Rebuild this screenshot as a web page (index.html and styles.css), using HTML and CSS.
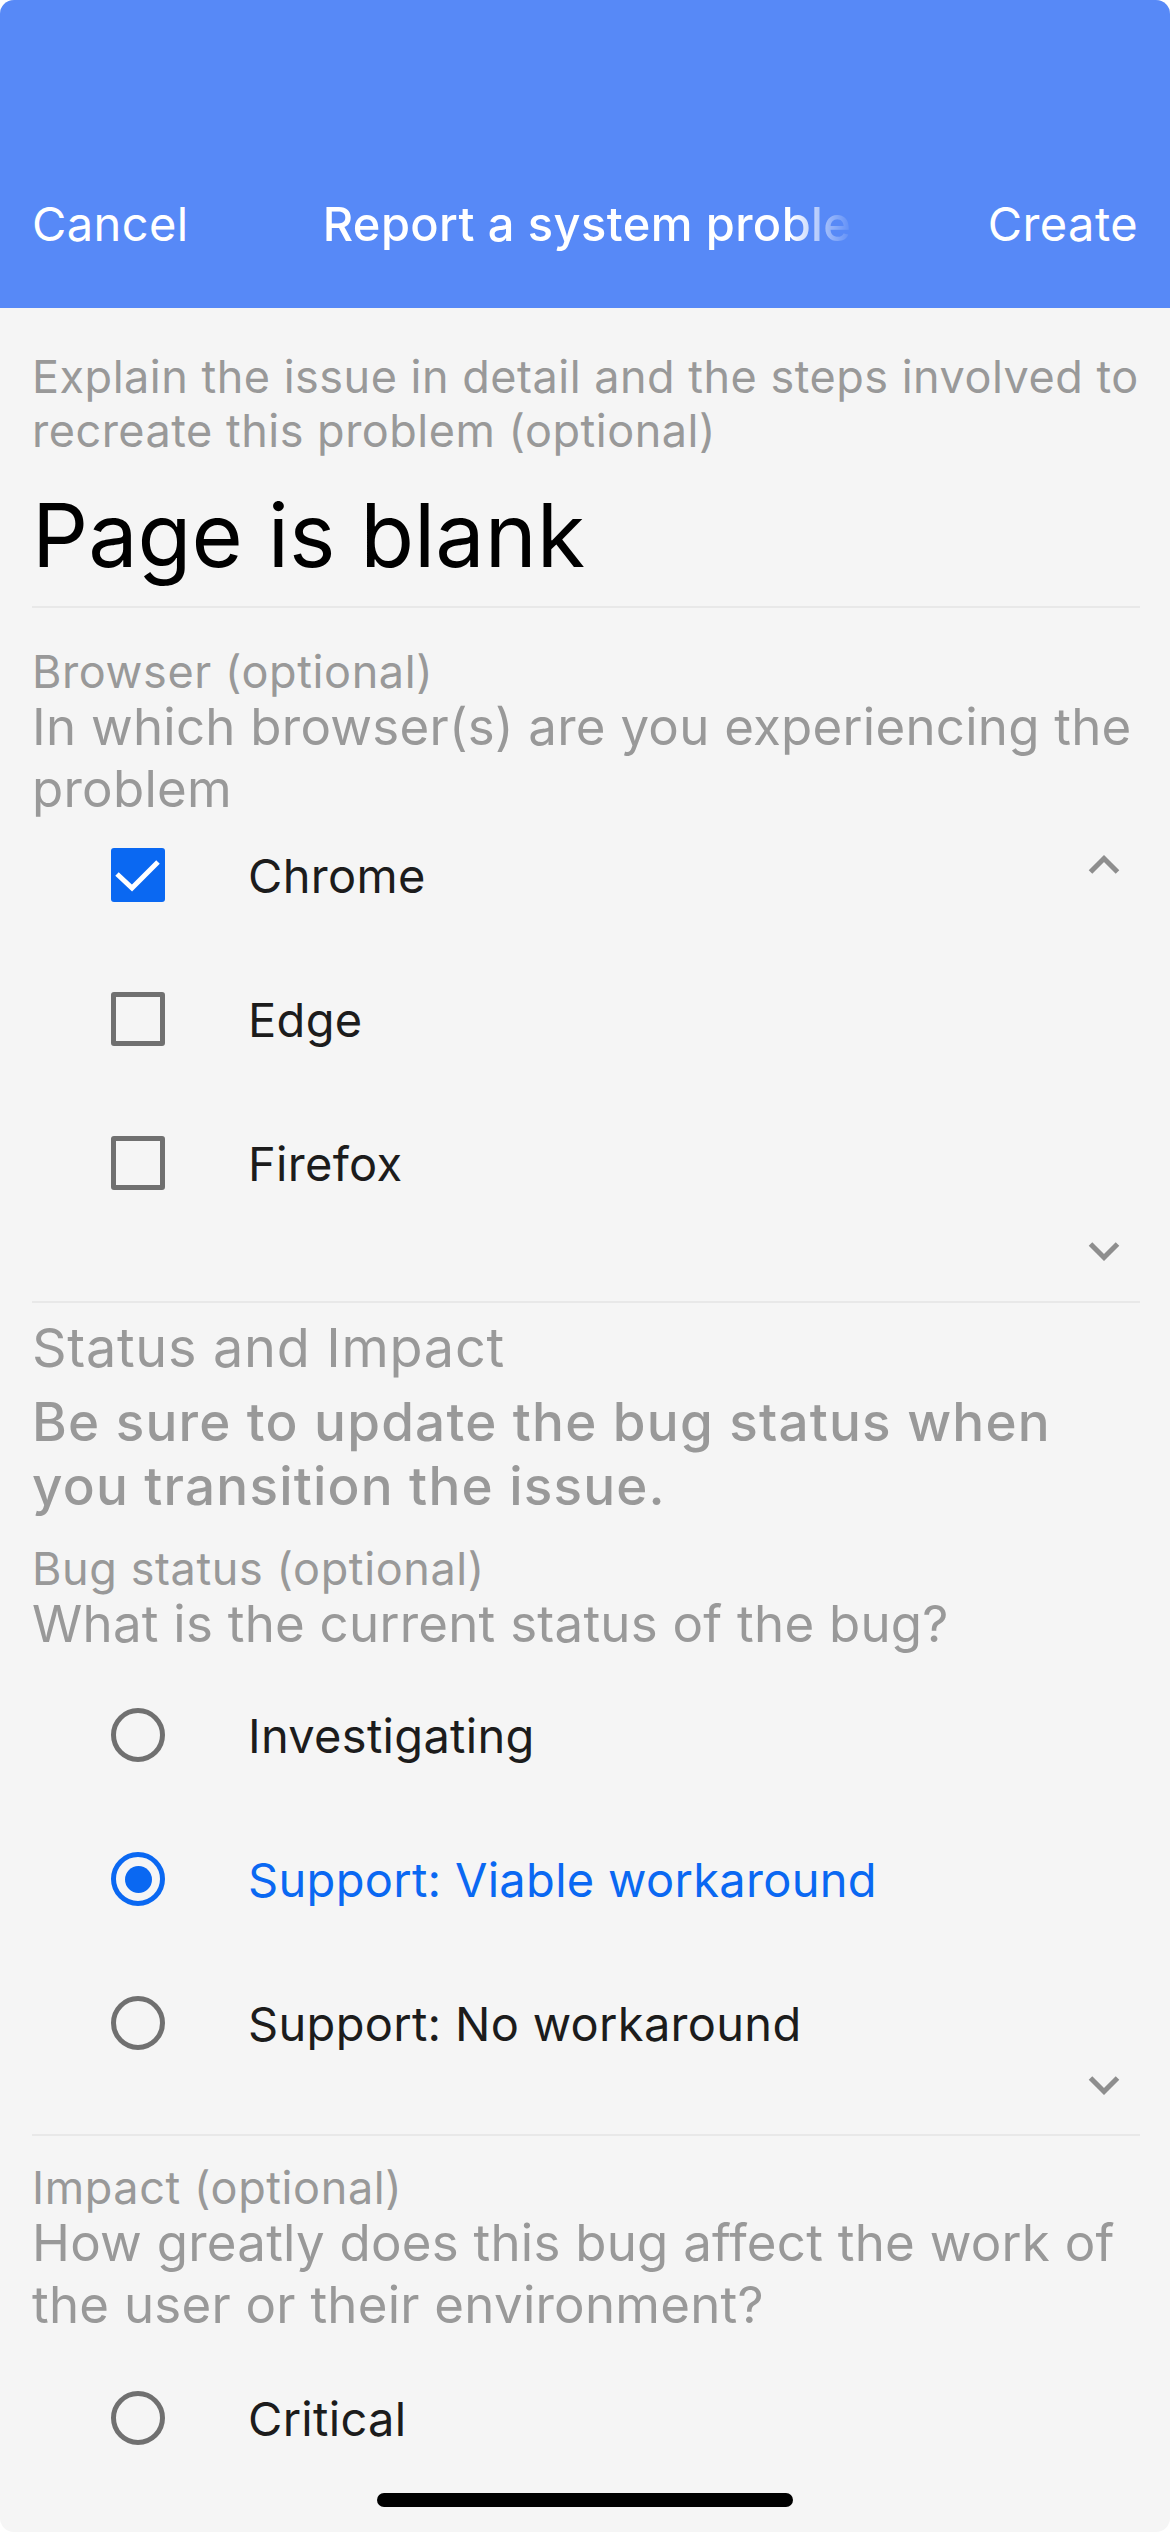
FILE: index.html
```html
<!DOCTYPE html>
<html>
<head lang="en">
    <meta charset="UTF-8">
    <meta name="viewport" content="width=device-width, initial-scale=1.0"/>
    <title>Report a system problem</title>
    <link rel="stylesheet" href="styles.css">
</head>
<body>
<div class="screen">
    <div class="nav">
        <span class="nav-btn">Cancel</span>
        <span class="nav-title">Report a system problem</span>
        <span class="nav-btn">Create</span>
    </div>

    <div class="content">
        <div class="field">
            <p class="field-label">Explain the issue in detail and the steps involved to recreate this problem (optional)</p>
            <p class="field-value">Page is blank</p>
        </div>

        <div class="group group-browser">
            <p class="q-label">Browser (optional)</p>
            <p class="q-desc">In which browser(s) are you experiencing the problem</p>
            <div class="picker">
                <div class="picker-body">
                    <ul class="options">
                        <li class="option">
                            <span class="check checked">
                                <svg viewBox="0 0 54 54" width="54" height="54"><path d="M6 26 L21 40 L47 14" fill="none" stroke="#fff" stroke-width="5"/></svg>
                            </span>
                            <span class="option-text">Chrome</span>
                        </li>
                        <li class="option">
                            <span class="check"></span>
                            <span class="option-text">Edge</span>
                        </li>
                        <li class="option">
                            <span class="check"></span>
                            <span class="option-text">Firefox</span>
                        </li>
                    </ul>
                    <svg class="chev chev-up" viewBox="0 0 34 21" width="34" height="21"><path d="M3.5 19 L17 5.5 L30.5 19" fill="none" stroke="#8e8e8e" stroke-width="5"/></svg>
                </div>
                <div class="picker-foot">
                    <svg class="chev" viewBox="0 0 34 21" width="34" height="21"><path d="M3.5 2 L17 15.5 L30.5 2" fill="none" stroke="#8e8e8e" stroke-width="5"/></svg>
                </div>
            </div>
        </div>

        <div class="group group-status">
            <h2 class="section-title">Status and Impact</h2>
            <p class="section-note">Be sure to update the bug status when you transition the issue.</p>

            <p class="q-label bug-label">Bug status (optional)</p>
            <p class="q-desc">What is the current status of the bug?</p>
            <div class="picker picker-radio">
                <div class="picker-body">
                    <ul class="options">
                        <li class="option">
                            <span class="radio"></span>
                            <span class="option-text">Investigating</span>
                        </li>
                        <li class="option selected">
                            <span class="radio"></span>
                            <span class="option-text">Support: Viable workaround</span>
                        </li>
                        <li class="option">
                            <span class="radio"></span>
                            <span class="option-text">Support: No workaround</span>
                        </li>
                    </ul>
                </div>
                <div class="picker-foot tight">
                    <svg class="chev" viewBox="0 0 34 21" width="34" height="21"><path d="M3.5 2 L17 15.5 L30.5 2" fill="none" stroke="#8e8e8e" stroke-width="5"/></svg>
                </div>
            </div>
        </div>

        <div class="group group-impact">
            <p class="q-label">Impact (optional)</p>
            <p class="q-desc">How greatly does this bug affect the work of the user or their environment?</p>
            <ul class="options picker-radio">
                <li class="option">
                    <span class="radio"></span>
                    <span class="option-text">Critical</span>
                </li>
            </ul>
        </div>
    </div>

    <div class="home-bar"></div>
</div>
</body>
</html>
```

FILE: styles.css
```css
html, body, p, h2, ul, li {
    padding: 0;
    margin: 0;
}

html {
    background: #fff;
}

body {
    font-family: 'Inter', 'Noto Sans', sans-serif;
    color: #1c1c1c;
}

.screen {
    position: relative;
    width: 1170px;
    height: 2532px;
    overflow: hidden;
    background: #f5f5f5;
    border-radius: 14px;
}

/* top bar */
.nav {
    height: 308px;
    box-sizing: border-box;
    padding: 0 32px 56px 32px;
    background: #5789f7;
    display: flex;
    align-items: flex-end;
    justify-content: space-between;
    color: #fff;
    font-size: 47px;
    line-height: 56px;
    letter-spacing: 0.4px;
}

.nav-title {
    width: 531px;
    font-weight: 500;
    white-space: nowrap;
    overflow: hidden;
    -webkit-mask-image: linear-gradient(to right, #000 88%, transparent 100%);
    mask-image: linear-gradient(to right, #000 88%, transparent 100%);
}

.content {
    padding: 42px 30px 0 32px;
}

/* text field */
.field {
    padding-bottom: 21px;
    border-bottom: 2px solid #e8e8e8;
}

.field-label {
    font-size: 45px;
    line-height: 54px;
    letter-spacing: 0.5px;
    color: #999;
}

.field-value {
    margin-top: 27px;
    font-size: 88px;
    line-height: 100px;
    color: #000;
}

.group {
    border-bottom: 2px solid #e8e8e8;
}

.group-browser {
    padding-top: 40px;
    padding-bottom: 38px;
}

.group-status {
    padding-top: 13px;
    padding-bottom: 37px;
}

.group-impact {
    padding-top: 28px;
    border-bottom: none;
}

.q-label {
    font-size: 45px;
    line-height: 48px;
    letter-spacing: 0.6px;
    color: #999;
}

.q-desc {
    font-size: 51px;
    line-height: 62px;
    letter-spacing: 0.25px;
    color: #999;
}

.section-title {
    font-size: 54px;
    line-height: 64px;
    font-weight: 400;
    letter-spacing: 0.7px;
    color: #999;
}

.section-note {
    max-width: 1060px;
    margin-top: 10px;
    font-size: 53px;
    line-height: 64px;
    font-weight: 500;
    letter-spacing: 1.2px;
    color: #999;
}

.bug-label {
    margin-top: 27px;
}

/* option lists */
.picker-body {
    display: flex;
}

.options {
    flex: 1;
    list-style: none;
    display: flex;
    flex-direction: column;
    gap: 34px;
}

.picker-radio {
    margin-top: 25px;
}

.group-impact .picker-radio {
    margin-top: 27px;
}

.option {
    height: 110px;
    display: flex;
    align-items: center;
    gap: 83px;
    padding-left: 79px;
    font-size: 47px;
    letter-spacing: 0.3px;
}

.option.selected .option-text {
    color: #0a68f2;
}

.check {
    width: 54px;
    height: 54px;
    box-sizing: border-box;
    border: 5px solid #707070;
    border-radius: 3px;
    flex-shrink: 0;
}

.check.checked {
    border: none;
    background: #0a68f2;
}

.check svg {
    display: block;
}

.radio {
    width: 54px;
    height: 54px;
    box-sizing: border-box;
    border: 5px solid #707070;
    border-radius: 50%;
    flex-shrink: 0;
    display: flex;
    align-items: center;
    justify-content: center;
}

.option.selected .radio {
    border-color: #0a68f2;
}

.option.selected .radio::after {
    content: '';
    width: 27px;
    height: 27px;
    border-radius: 50%;
    background: #0a68f2;
}

.chev {
    display: block;
    flex-shrink: 0;
}

.chev-up {
    margin: 33px 19px 0 0;
}

.picker-foot {
    display: flex;
    justify-content: flex-end;
    padding-right: 19px;
    margin-top: 24px;
}

.picker-foot.tight {
    margin-top: -2px;
}

.home-bar {
    position: absolute;
    left: 377px;
    bottom: 25px;
    width: 416px;
    height: 14px;
    border-radius: 7px;
    background: #000;
}
```
